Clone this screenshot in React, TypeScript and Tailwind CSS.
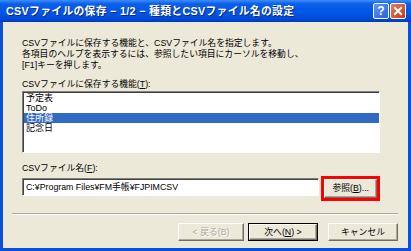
import React from 'react';

const font = "font-['Liberation_Sans','Noto_Sans_CJK_JP',sans-serif]";

const items = ['予定表', 'ToDo', '住所録', '記念日'];

const Btn: React.FC<{ children: React.ReactNode; className?: string; disabled?: boolean; isDefault?: boolean }> = ({
  children,
  className = '',
  disabled,
  isDefault,
}) => (
  <div className={`${isDefault ? 'border border-black' : ''} ${className}`}>
    <div
      className={`h-full w-full flex items-center justify-center bg-[#ece9d8] border border-t-white border-l-white border-b-[#716f64] border-r-[#716f64] shadow-[inset_-1px_-1px_0_#aca899] text-[8.8px] leading-none ${
        disabled ? 'text-[#aca899] [text-shadow:1px_1px_0_#ffffff]' : 'text-black'
      }`}
    >
      {children}
    </div>
  </div>
);

export default function App() {
  return (
    <div className={`w-[411px] h-[251px] flex flex-col bg-[#0a4fd9] ${font}`}>
      {/* Title bar */}
      <div className="h-[22px] flex items-center pl-[6px] pr-[5px] bg-[linear-gradient(to_bottom,#3d8dff_0%,#0a5ee9_18%,#0057e6_55%,#004ad9_85%,#0038bd_100%)]">
        <span className="text-white font-bold text-[10.8px] leading-none tracking-[0.3px] whitespace-nowrap [text-shadow:1px_1px_0_#0b2a86]">
          CSVファイルの保存 − 1/2 − 種類とCSVファイル名の設定
        </span>
        <div className="ml-auto flex gap-[1px]">
          <div className="w-[16px] h-[16px] rounded-[2px] border border-white bg-[linear-gradient(135deg,#5d95f7,#2a62e0)] flex items-center justify-center text-white font-bold text-[12px] leading-none">
            ?
          </div>
          <div className="w-[16px] h-[16px] rounded-[2px] border border-white bg-[linear-gradient(135deg,#ee7a56,#c63a18)] flex items-center justify-center">
            <svg width="10" height="10" viewBox="0 0 10 10">
              <path d="M2 2 L8 8 M8 2 L2 8" stroke="white" strokeWidth="2" strokeLinecap="square" />
            </svg>
          </div>
        </div>
      </div>

      {/* Client area */}
      <div className="flex-1 mx-[3px] mb-[3px] bg-[#ece9d8] flex flex-col text-black">
        <div className="pl-[19px] pr-[28px] flex flex-col">
          <div className="mt-[16px] text-[8.8px] leading-[11px] whitespace-nowrap">
            <p>CSVファイルに保存する機能と、CSVファイル名を指定します。</p>
            <p>各項目のヘルプを表示するには、参照したい項目にカーソルを移動し、</p>
            <p>[F1]キーを押します。</p>
          </div>

          <p className="mt-[8px] text-[8.8px] leading-[11px]">
            CSVファイルに保存する機能(<span className="underline">T</span>):
          </p>

          <div className="mt-[1px] h-[62px] bg-white border border-t-[#808080] border-l-[#808080] border-b-white border-r-white shadow-[inset_1px_1px_0_#404040] pt-[1px] pl-[1px]">
            {items.map((it, i) => (
              <div
                key={it}
                className={`h-[10px] text-[9px] leading-[10px] pl-[2px] ${i === 2 ? 'bg-[#316ac5] text-white' : ''}`}
              >
                {it}
              </div>
            ))}
          </div>

          <p className="mt-[10px] text-[8.8px] leading-[11px]">
            CSVファイル名(<span className="underline">F</span>):
          </p>

          <div className="mt-[2px] flex items-start gap-[2px]">
            <div className="mt-[2px] w-[300px] h-[18px] bg-white border border-t-[#808080] border-l-[#808080] border-b-white border-r-white shadow-[inset_1px_1px_0_#404040] flex items-center pl-[3px] text-[8.8px] leading-none whitespace-nowrap">
              C:¥Program Files¥FM手帳¥FJPIMCSV
            </div>
            <div className="w-[59px] h-[25px] border-[3px] border-[#ff0000]">
              <Btn className="h-full w-full">
                参照(<span className="underline">B</span>)...
              </Btn>
            </div>
          </div>
        </div>

        <div className="mt-[12px] ml-[9px] mr-[10px] border-t border-t-[#aca899] border-b border-b-white" />

        <div className="mt-[8px] flex justify-end pr-[10px]">
          <Btn disabled className="w-[66px] h-[18px]">
            &lt; 戻る(B)
          </Btn>
          <Btn isDefault className="ml-[4px] w-[70px] h-[18px]">
            次へ(<span className="underline">N</span>) &gt;
          </Btn>
          <Btn className="ml-[10px] w-[70px] h-[18px]">キャンセル</Btn>
        </div>
      </div>
    </div>
  );
}
